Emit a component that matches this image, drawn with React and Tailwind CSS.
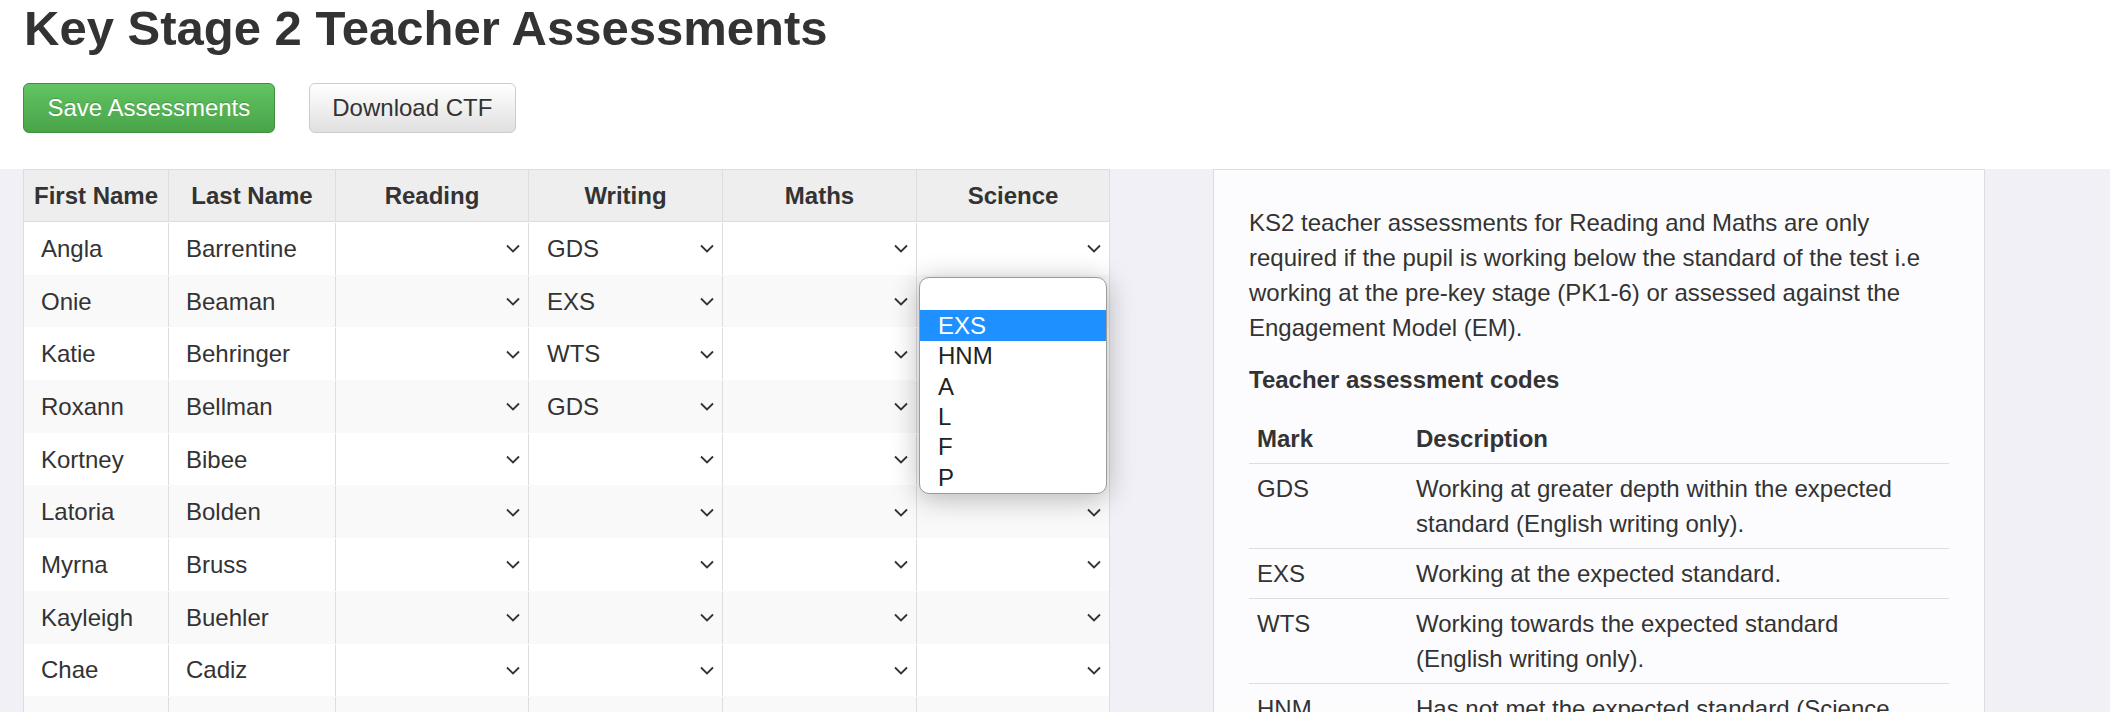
import React from 'react';

const rows = [
  ['Angla', 'Barrentine', '', 'GDS', '', ''],
  ['Onie', 'Beaman', '', 'EXS', '', ''],
  ['Katie', 'Behringer', '', 'WTS', '', ''],
  ['Roxann', 'Bellman', '', 'GDS', '', ''],
  ['Kortney', 'Bibee', '', '', '', ''],
  ['Latoria', 'Bolden', '', '', '', ''],
  ['Myrna', 'Bruss', '', '', '', ''],
  ['Kayleigh', 'Buehler', '', '', '', ''],
  ['Chae', 'Cadiz', '', '', '', ''],
  ['', '', '', '', '', ''],
];

const headers = ['First Name', 'Last Name', 'Reading', 'Writing', 'Maths', 'Science'];

const codes = [
  ['GDS', ['Working at greater depth within the expected', 'standard (English writing only).']],
  ['EXS', ['Working at the expected standard.']],
  ['WTS', ['Working towards the expected standard', '(English writing only).']],
  ['HNM', ['Has not met the expected standard (Science']],
];

const options = ['HNM', 'A', 'L', 'F', 'P'];

function Chevron() {
  return (
    <svg width="14" height="9" viewBox="0 0 14 9" className="shrink-0">
      <path d="M1 1.5l6 6 6-6" fill="none" stroke="#333" strokeWidth="1.8" />
    </svg>
  );
}

function SelectCell({ value }) {
  return (
    <div className="flex h-full items-center justify-between pl-[18px] pr-[8px]">
      <span>{value}</span>
      <Chevron />
    </div>
  );
}

function Dropdown() {
  return (
    <div className="absolute left-[895px] top-[107px] z-10 w-[188px] overflow-hidden rounded-[10px] border border-[#9a9a9a] bg-white shadow-[0_4px_28px_rgba(0,0,0,0.28)]">
      <div className="h-[32px]" />
      <div className="flex h-[31px] items-center bg-[#1e90ff] pl-[18px] text-white">EXS</div>
      {options.map((o) => (
        <div key={o} className="flex h-[30.4px] items-center pl-[18px] text-[#222]">
          {o}
        </div>
      ))}
    </div>
  );
}

export default function App() {
  return (
    <div className="h-[712px] overflow-hidden bg-white font-['Liberation_Sans',Arial,sans-serif] text-[24px] text-[#333]">
      <div className="h-[169px] pl-[24px]">
        <h1 className="pt-[1px] text-[49px] font-bold leading-[54px]">Key Stage 2 Teacher Assessments</h1>
        <div className="mt-[28px] flex gap-[34px]">
          <button className="-ml-px h-[50px] rounded-[6px] border border-[#3e8f3e] bg-gradient-to-b from-[#62c462] to-[#48a448] px-[23.5px] text-white [text-shadow:0_-1px_0_rgba(0,0,0,0.2)]">
            Save Assessments
          </button>
          <button className="h-[50px] rounded-[6px] border border-[#ccc] bg-gradient-to-b from-white to-[#e0e0e0] px-[22.5px] text-[#333]">
            Download CTF
          </button>
        </div>
      </div>

      <div className="flex h-[543px] items-start gap-[103px] bg-[#f0f0f6] pl-[23px]">
        <div className="relative w-[1087px] shrink-0 border border-[#ddd] bg-white">
          <div className="grid grid-cols-[144px_167px_193px_194px_194px_193px] bg-[#eeeeee]">
            {headers.map((h, i) => (
              <div
                key={h}
                className={`flex h-[52px] items-center justify-center border-b border-[#ddd] font-bold ${i > 0 ? 'border-l' : ''}`}
              >
                {h}
              </div>
            ))}
          </div>
          {rows.map((r, ri) => (
            <div
              key={ri}
              className={`grid h-[52.7px] grid-cols-[144px_167px_193px_194px_194px_193px] pt-[1px] ${ri % 2 === 1 ? 'bg-[#f9f9f9]' : 'bg-white'}`}
            >
              <div className="flex items-center pl-[17px]">{r[0]}</div>
              <div className="flex items-center border-l border-[#ddd] pl-[17px]">{r[1]}</div>
              {r.slice(2).map((v, ci) => (
                <div key={ci} className="border-l border-[#ddd]">
                  <SelectCell value={v} />
                </div>
              ))}
            </div>
          ))}
          <Dropdown />
        </div>

        <div className="w-[772px] shrink-0 border border-[#ddd] bg-[#fcfcfe] p-[35px] leading-[35px]">
          <p>
            KS2 teacher assessments for Reading and Maths are only
            <br />
            required if the pupil is working below the standard of the test i.e
            <br />
            working at the pre-key stage (PK1-6) or assessed against the
            <br />
            Engagement Model (EM).
          </p>
          <h4 className="mt-[17px] font-bold">Teacher assessment codes</h4>
          <div className="mt-[17px]">
            <div className="grid grid-cols-[159px_1fr] border-b border-[#ddd] font-bold">
              <div className="px-[8px] py-[7px]">Mark</div>
              <div className="px-[8px] py-[7px]">Description</div>
            </div>
            {codes.map(([m, lines]) => (
              <div key={m} className="grid grid-cols-[159px_1fr] border-b border-[#ddd]">
                <div className="px-[8px] py-[7px]">{m}</div>
                <div className="px-[8px] py-[7px]">
                  {lines.map((l, i) => (
                    <React.Fragment key={i}>
                      {i > 0 && <br />}
                      {l}
                    </React.Fragment>
                  ))}
                </div>
              </div>
            ))}
          </div>
        </div>
      </div>
    </div>
  );
}
